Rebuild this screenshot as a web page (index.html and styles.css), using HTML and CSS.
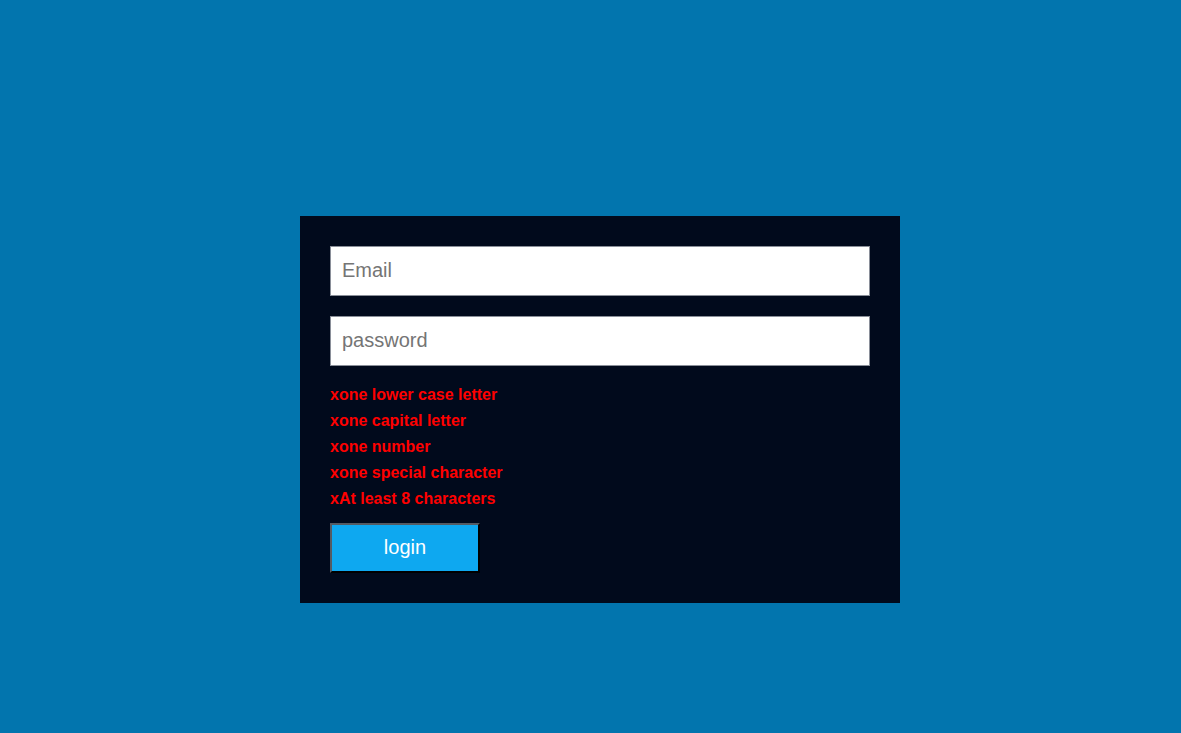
FILE: index.html
```html
<!DOCTYPE html>
<html>
<head>
<meta charset="utf-8">
<link rel="stylesheet" href="styles.css">
</head>
<body>
<div class="page">
  <form class="card">
    <input class="field" type="email" placeholder="Email">
    <input class="field field-pass" type="password" placeholder="password">
    <ul class="rules">
      <li>xone lower case letter</li>
      <li>xone capital letter</li>
      <li>xone number</li>
      <li>xone special character</li>
      <li>xAt least 8 characters</li>
    </ul>
    <button class="btn" type="button">login</button>
  </form>
</div>
</body>
</html>
```
FILE: styles.css
```css
html, body {
  margin: 0;
  padding: 0;
  background: #0275ae;
  height: 100%;
}
body {
  font-family: "Liberation Sans", Arial, sans-serif;
}
.page {
  padding-top: 216px;
  padding-left: 300px;
}
.card {
  width: 600px;
  box-sizing: border-box;
  background: #010a1c;
  padding: 30px 30px 30px;
  display: flex;
  flex-direction: column;
  align-items: flex-start;
}
.field {
  width: 540px;
  height: 50px;
  box-sizing: border-box;
  border: 1px solid #8a8f99;
  background: #fff;
  padding: 0 11px 2px;
  font-family: "Liberation Sans", Arial, sans-serif;
  font-size: 20px;
  color: #333;
  outline: none;
}
.field::placeholder {
  color: #757575;
}
.field-pass {
  margin-top: 20px;
}
.rules {
  list-style: none;
  margin: 16px 0 0;
  padding: 0;
  color: #ff0000;
  font-weight: bold;
  font-size: 16px;
  line-height: 26px;
}
.btn {
  margin-top: 11px;
  width: 150px;
  height: 50px;
  box-sizing: border-box;
  background: #0ea8f0;
  color: #fff;
  font-family: "Liberation Sans", Arial, sans-serif;
  font-size: 20px;
  border: 2px solid;
  border-color: #555b63 #000 #000 #555b63;
  padding: 0 0 2px;
}
```
